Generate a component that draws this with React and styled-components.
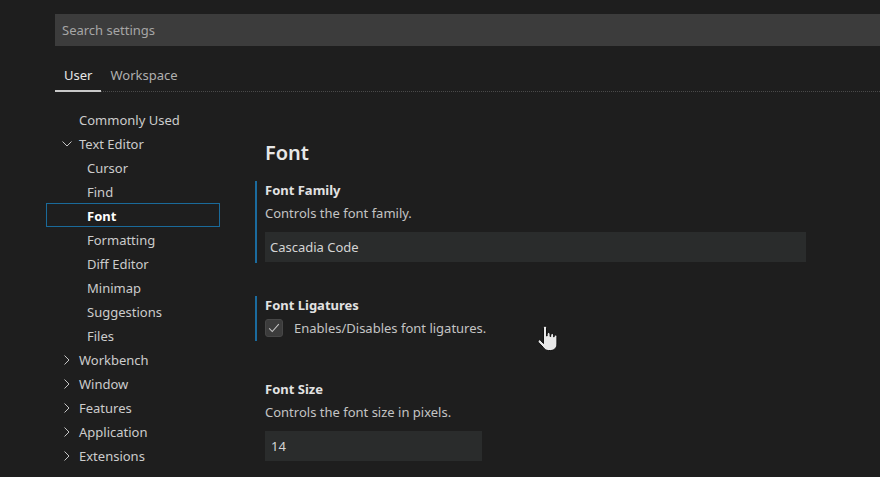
import React from "react";
import styled, { createGlobalStyle } from "styled-components";

const GlobalStyle = createGlobalStyle`
  html, body {
    margin: 0;
    padding: 0;
    background: #1e1e1e;
    overflow: hidden;
  }
  body {
    font-family: "Noto Sans", "Open Sans", sans-serif;
    color: #cccccc;
  }
`;

const Page = styled.div`
  position: relative;
  width: 880px;
  height: 477px;
  overflow: hidden;
  background: #1e1e1e;
`;

const Header = styled.div`
  padding: 14px 0 0 55px;
`;

const SearchBox = styled.div`
  height: 32px;
  background: #3c3c3c;
  display: flex;
  align-items: center;
  padding-left: 7px;
  font-size: 13px;
  color: #a6a6a6;
`;

const Tabs = styled.div`
  display: flex;
  margin-top: 14px;
  height: 32px;
  border-bottom: 1px dotted #4a4a4a;
  box-sizing: border-box;
`;

const Tab = styled.div`
  padding: 0 9px;
  display: flex;
  align-items: center;
  font-size: 13px;
  color: ${(p) => (p.active ? "#e7e7e7" : "#b0b0b0")};
  border-bottom: 2px solid ${(p) => (p.active ? "#c8c8c8" : "transparent")};
  margin-bottom: -1px;
`;

const Body = styled.div`
  display: flex;
  padding-top: 15px;
`;

const Nav = styled.div`
  width: 174px;
  margin-left: 46px;
  display: flex;
  flex-direction: column;
`;

const NavRow = styled.div`
  height: 24px;
  box-sizing: border-box;
  display: flex;
  align-items: center;
  padding-left: ${(p) => (p.child ? 40 : 12)}px;
  padding-top: 1px;
  font-size: 13px;
  color: ${(p) => (p.selected ? "#ffffff" : "#cccccc")};
  font-weight: ${(p) => (p.selected ? 700 : 400)};
  border: 1px solid ${(p) => (p.selected ? "#1a6a9a" : "transparent")};
`;

const Twistie = styled.span`
  width: 16px;
  height: 16px;
  margin-right: 4px;
  display: flex;
  align-items: center;
  justify-content: center;
`;

const Content = styled.div`
  margin-left: 35px;
  width: 560px;
  display: flex;
  flex-direction: column;
`;

const Heading = styled.h2`
  margin: 33px 0 0 10px;
  font-size: 20px;
  line-height: 26px;
  font-weight: 600;
  color: #e7e7e7;
`;

const Item = styled.div`
  border-left: 2px solid ${(p) => (p.focused ? "#1b6b9e" : "transparent")};
  padding: 0 0 ${(p) => p.bottom || 0}px 8px;
  margin-top: ${(p) => p.top}px;
`;

const Title = styled.div`
  font-size: 13px;
  line-height: 18px;
  font-weight: 700;
  color: #e2e2e2;
`;

const Desc = styled.div`
  margin-top: 5px;
  font-size: 13px;
  line-height: 18px;
  color: #c4c4c4;
`;

const Input = styled.div`
  margin-top: 10px;
  height: 30px;
  width: ${(p) => p.width}px;
  box-sizing: border-box;
  background: #2a2c2c;
  display: flex;
  align-items: center;
  padding-left: ${(p) => p.pad || 5}px;
  font-size: 13px;
  color: #d4d4d4;
`;

const CheckRow = styled.div`
  margin-top: 5px;
  display: flex;
  align-items: center;
  gap: 11px;
  font-size: 13px;
  color: #c4c4c4;
`;

const CheckBox = styled.div`
  width: 18px;
  height: 18px;
  box-sizing: border-box;
  border-radius: 3px;
  background: #3c3c3c;
  border: 1px solid #474747;
  display: flex;
  align-items: center;
  justify-content: center;
`;

const Cursor = styled.svg`
  position: absolute;
  left: 537px;
  top: 325px;
`;

const ChevronDown = () => (
  <svg width="12" height="12" viewBox="0 0 12 12">
    <path d="M1.5 3.5 L6 8 L10.5 3.5" fill="none" stroke="#c5c5c5" strokeWidth="1" />
  </svg>
);

const ChevronRight = () => (
  <svg width="12" height="12" viewBox="0 0 12 12">
    <path d="M3.5 1.5 L8 6 L3.5 10.5" fill="none" stroke="#c5c5c5" strokeWidth="1" />
  </svg>
);

const tree = [
  { label: "Commonly Used" },
  { label: "Text Editor", open: true },
  { label: "Cursor", child: true },
  { label: "Find", child: true },
  { label: "Font", child: true, selected: true },
  { label: "Formatting", child: true },
  { label: "Diff Editor", child: true },
  { label: "Minimap", child: true },
  { label: "Suggestions", child: true },
  { label: "Files", child: true },
  { label: "Workbench", closed: true },
  { label: "Window", closed: true },
  { label: "Features", closed: true },
  { label: "Application", closed: true },
  { label: "Extensions", closed: true },
];

export default function App() {
  return (
    <Page>
      <GlobalStyle />
      <Header>
        <SearchBox>Search settings</SearchBox>
        <Tabs>
          <Tab active>User</Tab>
          <Tab>Workspace</Tab>
        </Tabs>
      </Header>
      <Body>
        <Nav>
          {tree.map((t) => (
            <NavRow key={t.label} child={t.child} selected={t.selected}>
              {!t.child && (
                <Twistie>
                  {t.open && <ChevronDown />}
                  {t.closed && <ChevronRight />}
                </Twistie>
              )}
              {t.label}
            </NavRow>
          ))}
        </Nav>
        <Content>
          <Heading>Font</Heading>
          <Item focused top={15} bottom={1}>
            <Title>Font Family</Title>
            <Desc>Controls the font family.</Desc>
            <Input width={541}>Cascadia Code</Input>
          </Item>
          <Item focused top={33} bottom={4}>
            <Title>Font Ligatures</Title>
            <CheckRow>
              <CheckBox>
                <svg width="14" height="14" viewBox="0 0 16 16">
                  <path d="M2.5 8.5 L6 12 L13.5 3.5" fill="none" stroke="#c5c5c5" strokeWidth="1.2" />
                </svg>
              </CheckBox>
              Enables/Disables font ligatures.
            </CheckRow>
          </Item>
          <Item top={39}>
            <Title>Font Size</Title>
            <Desc>Controls the font size in pixels.</Desc>
            <Input width={217} pad={6}>14</Input>
          </Item>
        </Content>
      </Body>
      <Cursor width="22" height="28" viewBox="0 0 22 28">
        <path
          d="M6.5 2.5 a1.5 1.5 0 0 1 3 0 V11 h0.6 V9 a1.5 1.5 0 0 1 3 0 V11.5 h0.6 V10 a1.5 1.5 0 0 1 3 0 V12 h0.4 V11.5 a1.4 1.4 0 0 1 2.8 0 V19 c0 3.6-2.6 6.5-6.2 6.5 h-2.2 c-2.3 0-3.8-1.1-5.1-3 L1.4 17.2 a1.4 1.4 0 0 1 2.2-1.8 L6.5 18.5 Z"
          fill="#e8e8e8"
          stroke="#111"
          strokeWidth="1"
        />
      </Cursor>
    </Page>
  );
}
